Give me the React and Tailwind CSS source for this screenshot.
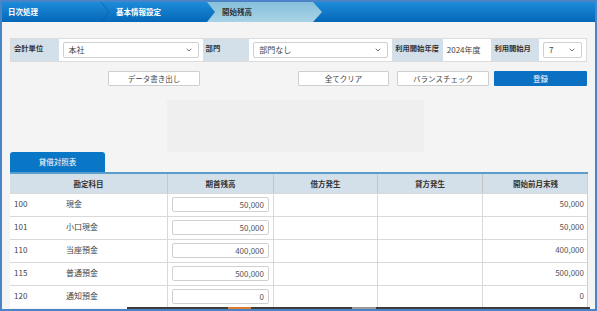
import { ChevronDown } from "lucide-react";

const rows = [
  { code: "100", name: "現金", start: "50,000", prev: "50,000" },
  { code: "101", name: "小口現金", start: "50,000", prev: "50,000" },
  { code: "110", name: "当座預金", start: "400,000", prev: "400,000" },
  { code: "115", name: "普通預金", start: "500,000", prev: "500,000" },
  { code: "120", name: "通知預金", start: "0", prev: "0" },
];

const Label = ({ w, children }) => (
  <div className={`${w} h-full bg-[#d3dfe9] px-[3px] pt-[4px] whitespace-nowrap text-[7.3px] font-bold text-[#333]`}>{children}</div>
);

const Select = ({ w, cell, value }) => (
  <div className={`${cell} h-full bg-white flex items-center px-[4px]`}>
    <div className={`${w} h-[16px] border border-[#cfcfcf] rounded-[2px] flex items-center justify-between px-[5px] text-[8px] text-[#444]`}>
      <span>{value}</span>
      <ChevronDown size={8} strokeWidth={2.5} className="text-[#555]" />
    </div>
  </div>
);

const Button = ({ className, children }) => (
  <button className={`h-[15px] border border-[#cfcfcf] bg-white rounded-[1px] text-[7.5px] text-[#444] ${className}`}>{children}</button>
);

export default function App() {
  return (
    <div className="relative w-[597px] h-[311px] overflow-hidden border-2 border-[#4a83c6] bg-[#f4f4f4] font-['Noto_Sans_CJK_JP',sans-serif]">
      {/* breadcrumb */}
      <div className="flex h-[20px] bg-gradient-to-b from-[#1c8cda] to-[#0667b7] text-[7.5px] font-bold text-white">
        <div className="w-[98px] pl-[6px] flex items-center">日次処理</div>
        <svg width="10" height="20" viewBox="0 0 10 20">
          <polyline points="1,0 9,10 1,20" fill="none" stroke="#0a5ea6" strokeWidth="1" opacity="0.7" />
        </svg>
        <div className="w-[97px] pl-[6px] flex items-center">基本情報設定</div>
        <div className="w-[115px] pl-[15px] flex items-center text-[#333] bg-gradient-to-b from-[#86bfdb] to-[#a9d3e5] [clip-path:polygon(0_0,106px_0,115px_50%,106px_100%,0_100%,8px_50%)]">
          開始残高
        </div>
      </div>

      {/* form row */}
      <div className="ml-[8px] mt-[16px] flex h-[24px] w-[577px] border border-[#dcdcdc]">
        <Label w="w-[48px]">会計単位</Label>
        <Select cell="w-[144px]" w="w-[136px]" value="本社" />
        <Label w="w-[47px]">部門</Label>
        <Select cell="w-[143px]" w="w-[136px]" value="部門なし" />
        <Label w="w-[51px]">利用開始年度</Label>
        <div className="w-[49px] h-full bg-white px-[4px] pt-[5px] text-[8px] text-[#444]">2024年度</div>
        <Label w="w-[48px]">利用開始月</Label>
        <Select cell="w-[47px]" w="w-[40px]" value="7" />
      </div>

      {/* buttons */}
      <div className="mt-[9px] flex">
        <Button className="ml-[106px] w-[92px]">データ書き出し</Button>
        <Button className="ml-[98px] w-[91px]">全てクリア</Button>
        <Button className="ml-[8px] w-[92px]">バランスチェック</Button>
        <button className="ml-[5px] w-[93px] h-[15px] bg-[#0b70c2] rounded-[1px] text-[7.5px] text-white">登録</button>
      </div>

      <div className="ml-[165px] mt-[14px] w-[257px] h-[52px] bg-[#efefef]" />

      {/* tab */}
      <div className="ml-[8px] w-[95px] h-[20px] rounded-t-[3px] bg-[#0a76c6] flex items-center justify-center text-[7.5px] text-white">
        貸借対照表
      </div>
      <div className="ml-[8px] w-[578px] h-[2px] bg-[#5a9ccc]" />

      {/* table */}
      <div className="ml-[8px] w-[578px] border-r border-[#d0d0d0]">
        <div className="grid grid-cols-[157px_106px_104px_105px_106px] h-[19px] bg-[#d3dfe9] text-[7.5px] font-bold text-[#333]">
          {["勘定科目", "期首残高", "借方発生", "貸方発生", "開始前月末残"].map((h, i) => (
            <div key={h} className={`flex items-center justify-center ${i > 0 ? "border-l border-[#c6c6c6]" : ""}`}>{h}</div>
          ))}
        </div>
        {rows.map((r) => (
          <div key={r.code} className="grid grid-cols-[157px_106px_104px_105px_106px] h-[23px] bg-white border-t border-[#d9d9d9] text-[8px] text-[#444]">
            <div className="flex pt-[4px] pl-[4px]">
              <span className="w-[52px]">{r.code}</span>
              <span>{r.name}</span>
            </div>
            <div className="border-l border-[#d9d9d9] px-[4px] pt-[3px]">
              <div className="h-[15px] border border-[#d0d0d0] rounded-[2px] flex items-center justify-end pr-[4px] text-[#555]">{r.start}</div>
            </div>
            <div className="border-l border-[#d9d9d9]" />
            <div className="border-l border-[#d9d9d9]" />
            <div className="border-l border-[#d9d9d9] pt-[4px] pr-[4px] text-right text-[#555]">{r.prev}</div>
          </div>
        ))}
      </div>

      {/* horizontal scroll strip */}
      <div className="absolute bottom-0 left-[125px] w-[463px] h-[2px] bg-[#3d3d3d]">
        <div className="absolute left-[101px] top-0 w-[23px] h-[2px] bg-[#e07a30]" />
        <div className="absolute left-[225px] top-0 w-[24px] h-[2px] bg-[#9a9a9a]" />
      </div>
    </div>
  );
}
